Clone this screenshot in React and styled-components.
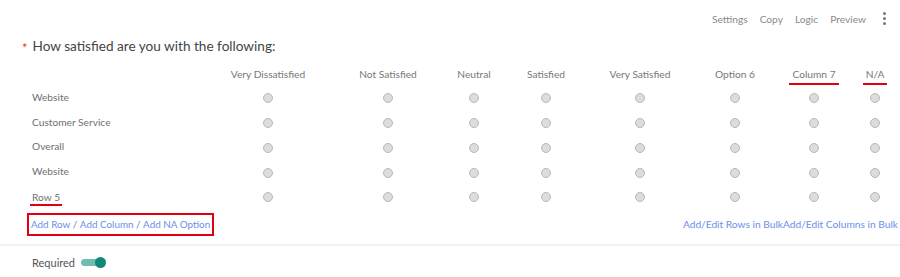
import React from "react";
import styled, { createGlobalStyle } from "styled-components";

const GlobalStyle = createGlobalStyle`
  body {
    margin: 0;
    background: #fff;
    font-family: Lato, "Open Sans", sans-serif;
  }
`;

const Page = styled.div`
  width: 900px;
  height: 277px;
  overflow: hidden;
  display: flex;
  flex-direction: column;
`;

const Toolbar = styled.div`
  height: 37px;
  display: flex;
  align-items: center;
  justify-content: flex-end;
  gap: 12px;
  padding-right: 14px;
`;

const ToolLink = styled.span`
  font-size: 10.2px;
  color: #8a8a8a;
`;

const Kebab = styled.span`
  display: flex;
  flex-direction: column;
  gap: 2px;
  margin-left: 5px;
  span {
    width: 3px;
    height: 3px;
    border-radius: 50%;
    background: #777;
  }
`;

const Title = styled.div`
  display: flex;
  align-items: center;
  gap: 5px;
  padding-left: 22px;
  height: 18px;
  font-size: 13.6px;
  color: #444;
`;

const Star = styled.span`
  color: #e53935;
  font-size: 13px;
  line-height: 1;
  position: relative;
  top: 2px;
`;

const Grid = styled.div`
  display: grid;
  grid-template-columns: 184px 120px 120px 52px 92px 96px 94px 64px 58px;
  grid-template-rows: 29px;
  grid-auto-rows: 24.75px;
  margin-left: 24px;
  margin-top: 2px;
`;

const HeadCell = styled.div`
  display: flex;
  align-items: flex-end;
  justify-content: center;
  padding-bottom: 1px;
  font-size: 10.2px;
  color: #777;
  white-space: nowrap;
`;

const HeadText = styled.span`
  line-height: 14px;
  padding: 0 ${(p) => (p.$marked ? "3px" : "0")} 2px;
  border-bottom: 2px solid ${(p) => (p.$marked ? "#e0000f" : "transparent")};
`;

const RowLabel = styled.div`
  display: flex;
  align-items: center;
  padding-left: 6px;
  font-size: 10.2px;
  color: #6f6f6f;
`;

const LabelText = styled.span`
  padding: 0 2px 1px;
  border-bottom: 2px solid ${(p) => (p.$marked ? "#e0000f" : "transparent")};
  margin-top: ${(p) => (p.$marked ? "3px" : "0")};
`;

const Cell = styled.div`
  display: flex;
  align-items: center;
  justify-content: center;
`;

const Radio = styled.span`
  width: 10px;
  height: 10px;
  border-radius: 50%;
  background: #dcdcdc;
  border: 1px solid #b8b8b8;
  box-sizing: border-box;
`;

const Footer = styled.div`
  display: flex;
  align-items: center;
  justify-content: space-between;
  padding-left: 27px;
  margin-top: 3px;
  height: 23px;
`;

const LinkBox = styled.div`
  border: 2px solid #e0000f;
  height: 23px;
  box-sizing: border-box;
  display: flex;
  align-items: center;
  padding: 0 2px;
  font-size: 9.9px;
  color: #6a7fb6;
  white-space: nowrap;
`;

const BlueLink = styled.span`
  color: #6d8ee8;
`;

const BulkLinks = styled.div`
  font-size: 10.2px;
  color: #6d8ee8;
  padding-right: 2px;
  white-space: nowrap;
`;

const Divider = styled.div`
  height: 2px;
  background: #f2f2f2;
  margin-top: 8px;
`;

const RequiredRow = styled.div`
  display: flex;
  align-items: center;
  gap: 6px;
  padding-left: 32px;
  margin-top: 10px;
  font-size: 11px;
  color: #555;
`;

const Toggle = styled.span`
  position: relative;
  width: 24px;
  height: 7px;
  border-radius: 4px;
  background: #6fbcb0;
  &::after {
    content: "";
    position: absolute;
    right: -1px;
    top: -2px;
    width: 11px;
    height: 11px;
    border-radius: 50%;
    background: #11877a;
  }
`;

const columns = [
  { name: "Very Dissatisfied" },
  { name: "Not Satisfied" },
  { name: "Neutral" },
  { name: "Satisfied" },
  { name: "Very Satisfied" },
  { name: "Option 6" },
  { name: "Column 7", marked: true },
  { name: "N/A", marked: true },
];

const rows = [
  { name: "Website" },
  { name: "Customer Service" },
  { name: "Overall" },
  { name: "Website" },
  { name: "Row 5", marked: true },
];

export default function App() {
  return (
    <Page>
      <GlobalStyle />
      <Toolbar>
        <ToolLink>Settings</ToolLink>
        <ToolLink>Copy</ToolLink>
        <ToolLink>Logic</ToolLink>
        <ToolLink>Preview</ToolLink>
        <Kebab>
          <span />
          <span />
          <span />
        </Kebab>
      </Toolbar>
      <Title>
        <Star>*</Star>
        How satisfied are you with the following:
      </Title>
      <Grid>
        <HeadCell />
        {columns.map((c) => (
          <HeadCell key={c.name}>
            <HeadText $marked={c.marked}>{c.name}</HeadText>
          </HeadCell>
        ))}
        {rows.map((r, i) => (
          <React.Fragment key={i}>
            <RowLabel>
              <LabelText $marked={r.marked}>{r.name}</LabelText>
            </RowLabel>
            {columns.map((c) => (
              <Cell key={c.name}>
                <Radio />
              </Cell>
            ))}
          </React.Fragment>
        ))}
      </Grid>
      <Footer>
        <LinkBox>
          <BlueLink>Add Row</BlueLink>&nbsp;/&nbsp;
          <BlueLink>Add Column</BlueLink>&nbsp;/&nbsp;
          <BlueLink>Add NA Option</BlueLink>
        </LinkBox>
        <BulkLinks>
          Add/Edit Rows in BulkAdd/Edit Columns in Bulk
        </BulkLinks>
      </Footer>
      <Divider />
      <RequiredRow>
        Required
        <Toggle />
      </RequiredRow>
    </Page>
  );
}
